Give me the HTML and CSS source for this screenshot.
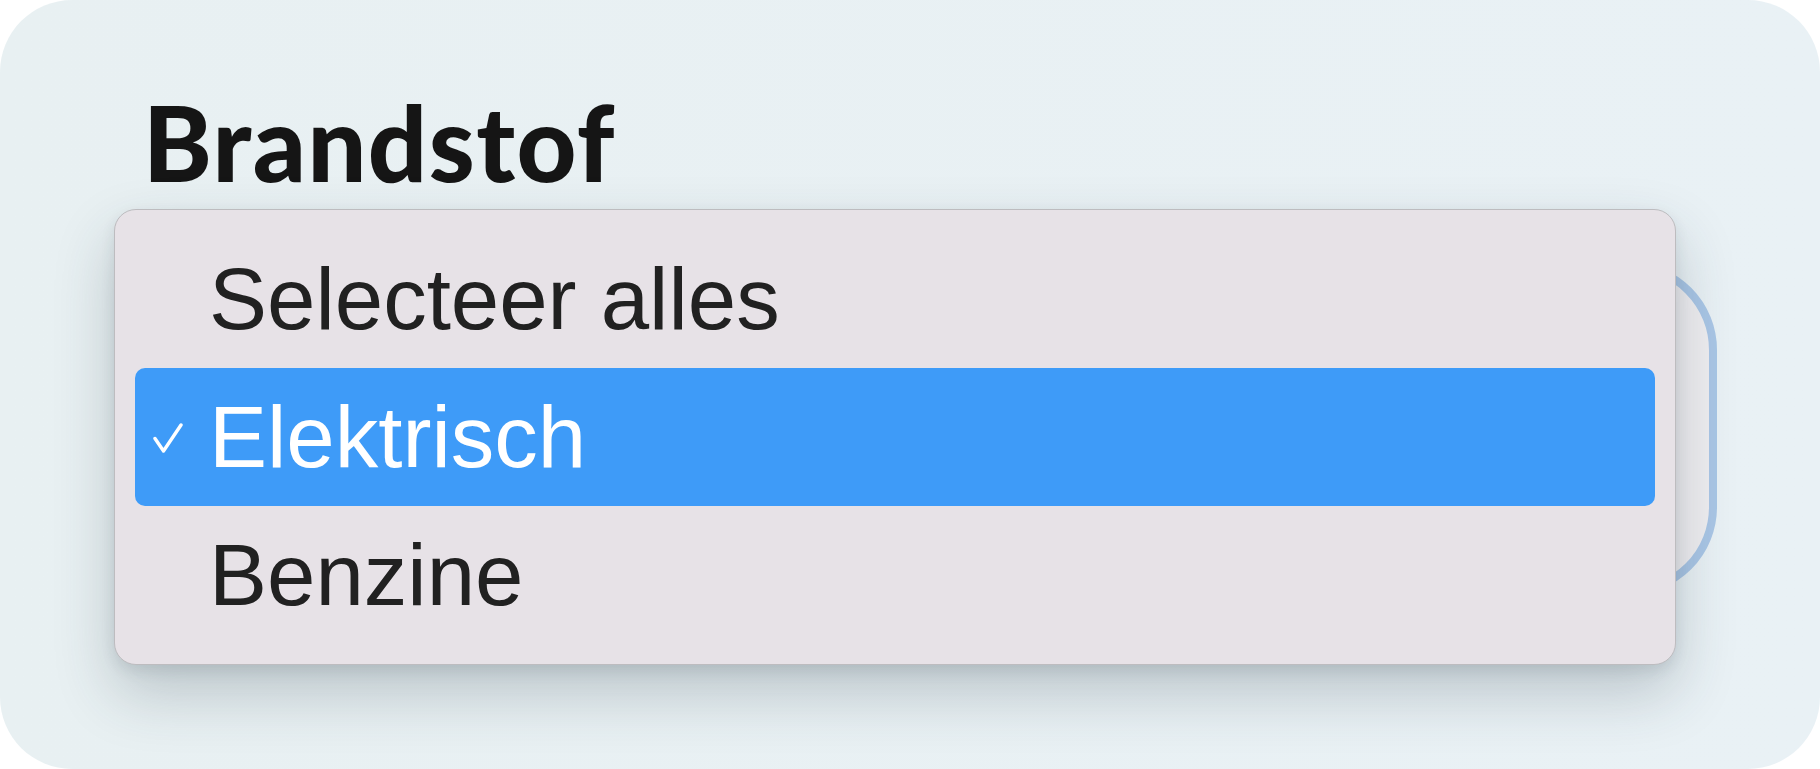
FILE: index.html
```html
<!DOCTYPE html>
<html lang="nl">
<head>
    <meta charset="UTF-8">
    <meta name="viewport" content="width=device-width, initial-scale=1.0">
    <title>Brandstof</title>
    <link rel="stylesheet" href="styles.css">
</head>
<body>
    <div class="panel">
        <div class="field">
            <label class="field-label" for="fuel">Brandstof</label>
            <div class="select-wrap">
                <div class="select-box" id="fuel"></div>
                <ul class="menu">
                    <li class="menu-item">Selecteer alles</li>
                    <li class="menu-item selected">
                        <svg class="check" viewBox="0 0 30 30" width="30" height="30">
                            <polyline points="2,15.5 10.5,28 28,2" fill="none" stroke="#fff" stroke-width="3.4" stroke-linecap="round" stroke-linejoin="round"/>
                        </svg>
                        Elektrisch
                    </li>
                    <li class="menu-item">Benzine</li>
                </ul>
            </div>
        </div>
    </div>
</body>
</html>
```

FILE: styles.css
```css
html, body {
    margin: 0;
    padding: 0;
    background: #fff;
}
body {
    width: 1820px;
    height: 769px;
    overflow: hidden;
    font-family: "Liberation Sans", Arial, sans-serif;
}
.panel {
    box-sizing: border-box;
    width: 1820px;
    height: 769px;
    border-radius: 72px;
    background: linear-gradient(90deg, #e8f0f2, #e9f1f5);
    padding: 90px 103px 0 143px;
}
.field {
    display: flex;
    flex-direction: column;
}
.field-label {
    display: block;
    font-family: "Lato", "Liberation Sans", sans-serif;
    font-weight: 900;
    font-size: 104px;
    line-height: 1;
    color: #151515;
    letter-spacing: 1.5px;
    height: 172px;
}
.select-wrap {
    position: relative;
    margin-left: 6px;
}
.select-box {
    box-sizing: border-box;
    height: 333px;
    border: 8px solid #a9c6e6;
    border-radius: 88px;
    background: #efeef1;
}
.menu {
    position: absolute;
    top: -53px;
    left: -35px;
    right: 41px;
    margin: 0;
    padding: 20px;
    list-style: none;
    background: #e7e2e7;
    border: 1px solid #bdbcbf;
    border-radius: 22px;
    box-shadow: 0 28px 60px rgba(40, 60, 70, 0.24), 0 6px 14px rgba(40, 60, 70, 0.1);
}
.menu-item {
    position: relative;
    display: flex;
    align-items: center;
    height: 138px;
    padding-left: 74px;
    font-size: 87px;
    color: #212121;
    border-radius: 10px;
}
.menu-item.selected {
    background: #3e9bf8;
    color: #fff;
}
.check {
    position: absolute;
    left: 18px;
    top: 55px;
}
```
